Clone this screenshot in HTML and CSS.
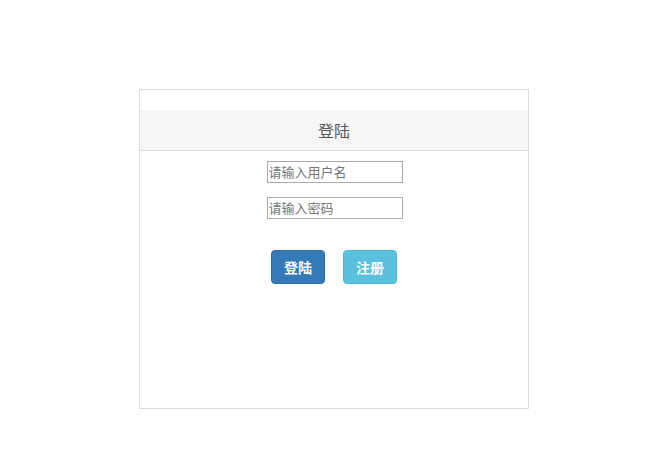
FILE: index.html
```html
<!DOCTYPE html>
<html lang="zh">
<head>
<meta charset="utf-8">
<title>登陆</title>
<link rel="stylesheet" href="styles.css">
</head>
<body>
<div class="page">
  <div class="card">
    <div class="card-header">登陆</div>
    <form class="card-body">
      <input class="field" type="text" placeholder="请输入用户名">
      <input class="field" type="password" placeholder="请输入密码">
      <div class="actions">
        <button type="button" class="btn btn-primary">登陆</button>
        <button type="button" class="btn btn-info">注册</button>
      </div>
    </form>
  </div>
</div>
</body>
</html>
```

FILE: styles.css
```css
html, body {
  margin: 0;
  padding: 0;
  background: #fff;
  font-family: "Liberation Sans", "Noto Sans CJK SC", sans-serif;
}
.page {
  padding: 89px 0 0 139px;
}
.card {
  box-sizing: border-box;
  width: 390px;
  height: 320px;
  border: 1px solid #dddddd;
  padding-top: 20px;
}
.card-header {
  height: 40px;
  background: #f6f6f6;
  border-bottom: 1px solid #dddddd;
  display: flex;
  align-items: center;
  justify-content: center;
  font-size: 16px;
  color: #555;
}
.card-body {
  display: flex;
  flex-direction: column;
  align-items: center;
  padding-top: 10px;
  margin: 0;
}
.field {
  box-sizing: border-box;
  width: 136px;
  height: 22px;
  margin: 0 0 14px 1px;
  padding: 1px 1px;
  border: 1px solid #a9a9a9;
  font-family: "Liberation Sans", "Noto Sans CJK SC", sans-serif;
  font-size: 13px;
  color: #333;
  outline: none;
}
.field::placeholder {
  color: #757575;
}
.actions {
  display: flex;
  gap: 18px;
  margin-top: 17px;
}
.btn {
  box-sizing: border-box;
  height: 34px;
  padding: 0 12px;
  border: 1px solid transparent;
  border-radius: 4px;
  font-family: "Liberation Sans", "Noto Sans CJK SC", sans-serif;
  font-size: 14px;
  font-weight: bold;
  color: #fff;
  cursor: pointer;
}
.btn-primary {
  background: #337ab7;
  border-color: #2e6da4;
}
.btn-info {
  background: #5bc0de;
  border-color: #46b8da;
}
```
